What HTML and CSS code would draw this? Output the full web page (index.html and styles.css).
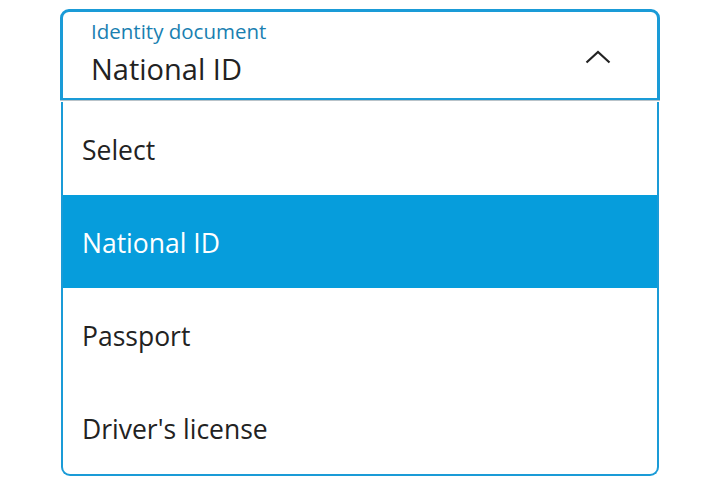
FILE: index.html
```html
<!DOCTYPE html>
<html>
<head>
<meta charset="utf-8">
<link rel="stylesheet" href="styles.css">
</head>
<body>
<div class="select">
  <div class="field">
    <div class="field-text">
      <div class="label">Identity document</div>
      <div class="value">National ID</div>
    </div>
    <svg class="chevron" width="26" height="14" viewBox="0 0 26 14"><path d="M1.5 12.5 L13 2 L24.5 12.5" fill="none" stroke="#222" stroke-width="2.2"/></svg>
  </div>
  <ul class="listbox">
    <li class="option">Select</li>
    <li class="option selected">National ID</li>
    <li class="option">Passport</li>
    <li class="option">Driver's license</li>
  </ul>
</div>
</body>
</html>
```
FILE: styles.css
```css
html, body {
  margin: 0;
  padding: 0;
  background: #fff;
}
body {
  font-family: "Open Sans", "Noto Sans", sans-serif;
  color: #222;
}
.select {
  width: 600px;
  margin: 9px 0 0 60px;
}
.field {
  box-sizing: border-box;
  height: 91px;
  border: 3px solid #1a9bd7;
  border-bottom: 2px solid #1a9bd7;
  border-radius: 9px 9px 0 0;
  display: flex;
  align-items: center;
  justify-content: space-between;
  padding: 0 46px 0 28px;
  box-shadow: 0 1px 0 #b9c3c9;
}
.field-text {
  display: flex;
  flex-direction: column;
  margin-top: -4px;
}
.label {
  font-size: 20.5px;
  line-height: 26px;
  color: #1a7fb1;
}
.value {
  font-size: 29px;
  line-height: 38px;
  margin-top: 6px;
}
.chevron {
  display: block;
  margin-top: 4px;
}
.listbox {
  list-style: none;
  margin: 2px 0 0 1px;
  padding: 0;
  width: 598px;
  box-sizing: border-box;
  border: 2px solid #1a9bd7;
  border-top: none;
  border-radius: 0 0 9px 9px;
  overflow: hidden;
}
.option {
  height: 93px;
  box-sizing: border-box;
  padding: 3px 0 0 19px;
  display: flex;
  align-items: center;
  font-size: 26.5px;
  color: #222;
}
.selected {
  background: #069ddc;
  color: #fff;
}
```
